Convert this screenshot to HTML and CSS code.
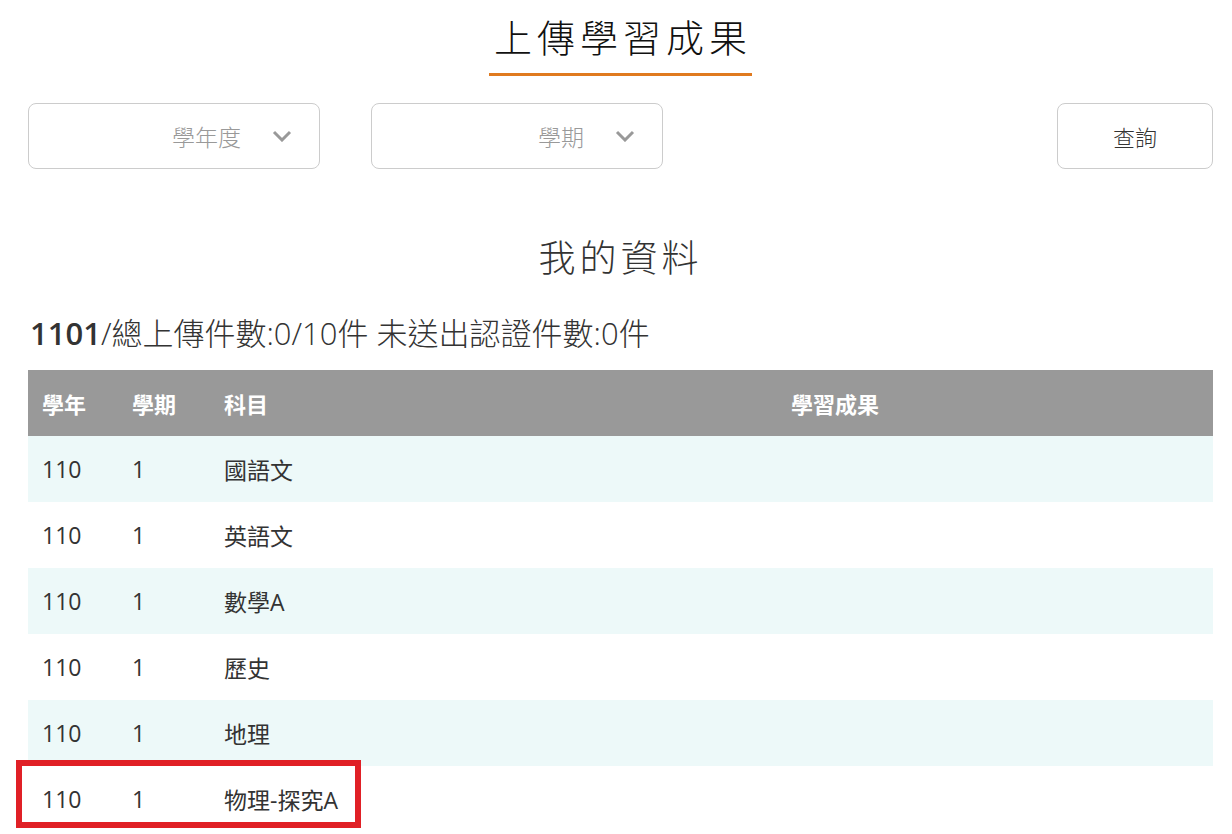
FILE: index.html
```html
<!DOCTYPE html>
<html lang="zh-Hant">
  <head>
    <meta charset="UTF-8" />
    <meta name="viewport" content="width=device-width, initial-scale=1.0" />
    <title>上傳學習成果</title>
    <link rel="stylesheet" href="styles.css">
  </head>
  <body>
    <div class="page">
      <div class="title-wrap">
        <h1 class="page-title">上傳學習成果</h1>
      </div>

      <div class="filter-bar">
        <div class="select-box">
          <span class="select-text">學年度</span>
          <svg class="chevron" width="20" height="12" viewBox="0 0 20 12">
            <polyline points="2,2 10,10 18,2" fill="none" stroke="#999" stroke-width="3" />
          </svg>
        </div>
        <div class="select-box">
          <span class="select-text">學期</span>
          <svg class="chevron" width="20" height="12" viewBox="0 0 20 12">
            <polyline points="2,2 10,10 18,2" fill="none" stroke="#999" stroke-width="3" />
          </svg>
        </div>
        <button class="query-btn" type="button">查詢</button>
      </div>

      <h2 class="section-title">我的資料</h2>

      <p class="summary"><b>1101</b>/總上傳件數:0/10件 未送出認證件數:0件</p>

      <table class="data-table">
        <thead>
          <tr>
            <th class="col-year">學年</th>
            <th class="col-term">學期</th>
            <th class="col-subject">科目</th>
            <th class="col-result">學習成果</th>
          </tr>
        </thead>
        <tbody>
          <tr><td>110</td><td>1</td><td>國語文</td><td></td></tr>
          <tr><td>110</td><td>1</td><td>英語文</td><td></td></tr>
          <tr><td>110</td><td>1</td><td>數學A</td><td></td></tr>
          <tr><td>110</td><td>1</td><td>歷史</td><td></td></tr>
          <tr><td>110</td><td>1</td><td>地理</td><td></td></tr>
          <tr class="marked"><td>110</td><td>1</td><td>物理-探究A<span class="mark-box"></span></td><td></td></tr>
        </tbody>
      </table>
    </div>
  </body>
</html>
```

FILE: styles.css
```css
body {
  margin: 0;
  font-family: "Open Sans", "Noto Sans CJK TC", sans-serif;
  color: #333;
  background-color: #fff;
  overflow: hidden;
}
.page {
  width: 1185px;
  margin-left: 28px;
}
.title-wrap {
  text-align: center;
  padding-top: 8px;
}
.page-title {
  display: inline-block;
  margin: 0;
  padding: 0 0 10px 5px;
  font-family: "Noto Sans CJK TC", sans-serif;
  font-size: 38px;
  font-weight: 300;
  letter-spacing: 5px;
  color: #111;
  line-height: 55px;
  border-bottom: 3px solid #e07a1f;
}
.filter-bar {
  display: flex;
  align-items: center;
  margin-top: 27px;
}
.select-box {
  width: 292px;
  height: 66px;
  box-sizing: border-box;
  border: 1px solid #ccc;
  border-radius: 8px;
  display: flex;
  align-items: center;
  justify-content: flex-end;
  padding-right: 27px;
  margin-right: 51px;
}
.select-text {
  font-family: "Noto Sans CJK TC", sans-serif;
  font-size: 23px;
  font-weight: 300;
  color: #999;
  margin-right: 31px;
}
.chevron {
  display: block;
}
.query-btn {
  margin-left: auto;
  width: 156px;
  height: 66px;
  background: #fff;
  border: 1px solid #ccc;
  border-radius: 8px;
  font-family: "Noto Sans CJK TC", sans-serif;
  font-size: 22px;
  font-weight: 300;
  color: #333;
  cursor: pointer;
}
.section-title {
  margin: 62px 0 0;
  text-align: center;
  font-family: "Noto Sans CJK TC", sans-serif;
  font-size: 37px;
  font-weight: 300;
  letter-spacing: 4px;
  line-height: 50px;
  color: #333;
}
.summary {
  margin: 30px 0 0 2px;
  font-size: 31px;
  font-weight: 300;
  line-height: 44px;
  color: #333;
}
.summary b {
  font-weight: 600;
}
.data-table {
  width: 100%;
  margin-top: 15px;
  border-collapse: collapse;
  font-size: 23px;
}
.data-table th {
  height: 66px;
  padding: 0 14px;
  background-color: #999;
  color: #fff;
  font-size: 22px;
  font-weight: 700;
  text-align: left;
}
.data-table th.col-result {
  text-align: center;
}
.col-year {
  width: 62px;
}
.col-term {
  width: 64px;
}
.col-subject {
  width: 219px;
}
.data-table td {
  height: 66px;
  padding: 0 14px;
  color: #333;
}
.data-table tbody tr:nth-child(odd) {
  background-color: #edf9f9;
}
.data-table td:nth-child(3) {
  position: relative;
}
.mark-box {
  position: absolute;
  left: -194px;
  top: -6px;
  width: 345px;
  height: 68px;
  box-sizing: border-box;
  border: 6px solid #e02026;
}
```
